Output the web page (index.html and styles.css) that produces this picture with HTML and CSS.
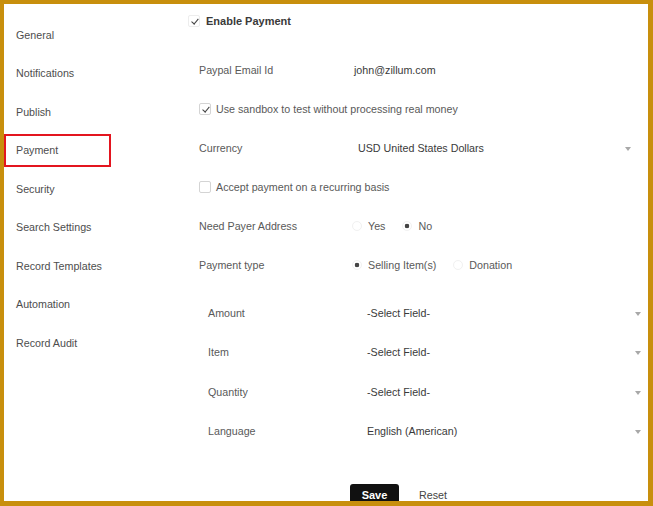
FILE: index.html
```html
<!DOCTYPE html>
<html lang="en">
  <head>
    <meta charset="UTF-8" />
    <meta name="viewport" content="width=device-width, initial-scale=1.0" />
    <title>Payment Settings</title>
    <link rel="stylesheet" href="styles.css">
  </head>
  <body>
    <div class="frame">
      <nav class="sidebar">
        <a class="nav-item">General</a>
        <a class="nav-item">Notifications</a>
        <a class="nav-item">Publish</a>
        <a class="nav-item active">Payment</a>
        <a class="nav-item">Security</a>
        <a class="nav-item">Search Settings</a>
        <a class="nav-item">Record Templates</a>
        <a class="nav-item">Automation</a>
        <a class="nav-item">Record Audit</a>
      </nav>
      <main class="content">
        <label class="check enable">
          <span class="box faint checked"></span>Enable Payment
        </label>
        <div class="fields">
          <div class="row">
            <span class="label">Paypal Email Id</span>
            <span class="value">john@zillum.com</span>
          </div>
          <div class="row">
            <label class="check">
              <span class="box checked"></span>Use sandbox to test without processing real money
            </label>
          </div>
          <div class="row">
            <span class="label">Currency</span>
            <div class="select currency">USD United States Dollars<span class="arrow"></span></div>
          </div>
          <div class="row">
            <label class="check">
              <span class="box"></span>Accept payment on a recurring basis
            </label>
          </div>
          <div class="row">
            <span class="label">Need Payer Address</span>
            <div class="radios">
              <label class="radio"><span class="dot"></span>Yes</label>
              <label class="radio"><span class="dot on"></span>No</label>
            </div>
          </div>
          <div class="row">
            <span class="label">Payment type</span>
            <div class="radios">
              <label class="radio"><span class="dot on"></span>Selling Item(s)</label>
              <label class="radio"><span class="dot"></span>Donation</label>
            </div>
          </div>
        </div>
        <div class="fields sub">
          <div class="row">
            <span class="label">Amount</span>
            <div class="select">-Select Field-<span class="arrow"></span></div>
          </div>
          <div class="row">
            <span class="label">Item</span>
            <div class="select">-Select Field-<span class="arrow"></span></div>
          </div>
          <div class="row">
            <span class="label">Quantity</span>
            <div class="select">-Select Field-<span class="arrow"></span></div>
          </div>
          <div class="row">
            <span class="label">Language</span>
            <div class="select">English (American)<span class="arrow"></span></div>
          </div>
        </div>
        <div class="actions">
          <button class="btn-save">Save</button>
          <a class="reset">Reset</a>
        </div>
      </main>
    </div>
  </body>
</html>
```

FILE: styles.css
```css
body {
  margin: 0;
  font-family: "Liberation Sans", Arial, sans-serif;
  font-size: 10.7px;
  color: #595959;
}
.frame {
  width: 653px;
  height: 506px;
  box-sizing: border-box;
  border: solid #c88f0d;
  border-width: 4px 5px 5px 4px;
  background: #fff;
  display: flex;
  overflow: hidden;
}
.sidebar {
  width: 184px;
  flex: none;
  padding-top: 14.5px;
}
.nav-item {
  display: block;
  box-sizing: border-box;
  width: 107px;
  height: 33px;
  line-height: 29px;
  padding-left: 10px;
  margin-bottom: 5.5px;
  border: 2px solid transparent;
  color: #4d4d4d;
}
.nav-item.active {
  border-color: #e3151f;
}
.content {
  flex: 1;
}
.check {
  display: flex;
  align-items: center;
  color: #595959;
}
.enable {
  height: 34px;
  font-weight: bold;
  font-size: 11px;
  color: #3a3a3a;
}
.box {
  position: relative;
  width: 12px;
  height: 12px;
  box-sizing: border-box;
  border: 1px solid #d4d4d4;
  border-radius: 2px;
  margin-right: 5px;
  flex: none;
}
.box.faint {
  border-color: #ededed;
  margin-right: 6px;
}
.box.checked::after {
  content: "";
  position: absolute;
  left: 3.5px;
  top: 1px;
  width: 2.5px;
  height: 6px;
  border: solid #444;
  border-width: 0 1.2px 1.2px 0;
  transform: rotate(40deg);
}
.fields {
  margin-top: 12.5px;
}
.row {
  display: flex;
  align-items: center;
  height: 39px;
  padding-left: 11px;
}
.row.tall {
  height: 41px;
}
.label {
  width: 155px;
  flex: none;
}
.value {
  color: #3a3a3a;
}
.select {
  position: relative;
  flex: 1;
  padding-left: 4px;
  margin-right: 3px;
  color: #3a3a3a;
}
.select.currency {
  margin-right: 13px;
}
.arrow {
  position: absolute;
  right: 4px;
  top: 5px;
  border-left: 3.5px solid transparent;
  border-right: 3.5px solid transparent;
  border-top: 4px solid #a8a8a8;
}
.radios {
  display: flex;
  align-items: center;
  margin-left: -2px;
}
.radio {
  display: flex;
  align-items: center;
  margin-right: 17px;
  color: #595959;
}
.dot {
  width: 10px;
  height: 10px;
  box-sizing: border-box;
  border: 1px solid #f1f1f1;
  border-radius: 50%;
  margin-right: 6px;
}
.dot.on {
  background: radial-gradient(circle, #444 0, #444 2px, #fff 2.6px);
}
.sub {
  margin-top: 8.25px;
}
.sub .row {
  height: 39.5px;
  padding-left: 20px;
}
.actions {
  margin-top: 33.25px;
  padding-left: 162px;
  display: flex;
  align-items: center;
}
.btn-save {
  width: 49px;
  height: 22px;
  border: none;
  border-radius: 3px;
  background: #111;
  color: #fff;
  font-family: "Liberation Sans", Arial, sans-serif;
  font-weight: bold;
  font-size: 11px;
  padding: 0;
}
.reset {
  margin-left: 20px;
  color: #444;
}
```
